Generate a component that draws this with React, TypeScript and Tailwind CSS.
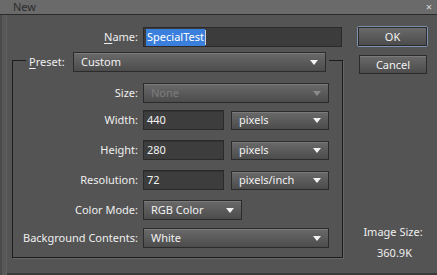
import React from "react";

function Arrow({ disabled }: { disabled?: boolean }) {
  return (
    <svg width="8" height="5" viewBox="0 0 8 5" className="shrink-0">
      <path d="M0 0 L8 0 L4 5 Z" fill={disabled ? "#8a8a8a" : "#f2f2f2"} />
    </svg>
  );
}

function Select({ w, text, disabled, h }: { w: string; text: string; disabled?: boolean; h?: string }) {
  return (
    <div
      className={`${w} ${h ?? "h-[20px]"} flex items-center justify-between pl-[7px] pr-[7px] border border-[#2b2b2b] bg-linear-to-b from-[#6a6a6a] to-[#4c4c4c] shadow-[inset_0_1px_0_#7a7a7a]`}
    >
      <span className={disabled ? "text-[#7c7c7c]" : "text-[#f2f2f2]"}>{text}</span>
      <Arrow disabled={disabled} />
    </div>
  );
}

function Input({ w, text }: { w: string; text: string }) {
  return (
    <div className={`${w} h-[20px] flex items-center pl-[3px] border border-[#2a2a2a] bg-[#3d3d3d] shadow-[inset_0_1px_0_#333] text-[#f2f2f2]`}>
      {text}
    </div>
  );
}

function Row({ label, mt, children }: { label: string; mt: string; children: React.ReactNode }) {
  return (
    <div className={`flex items-center h-[20px] ${mt}`}>
      <div className="w-[126px] text-right text-[#efefef] pr-[1px]">{label}</div>
      <div className="flex items-center gap-[7px] ml-[4px]">{children}</div>
    </div>
  );
}

export default function App() {
  return (
    <div
      className="w-[437px] h-[275px] bg-[#545454] flex flex-col overflow-hidden text-[11px] leading-[14px] text-[#efefef] shadow-[inset_0_-2px_0_#3a3a3a]"
      style={{ fontFamily: '"Noto Sans", "Open Sans", sans-serif' }}
    >
      {/* Title bar */}
      <div className="h-[15px] shrink-0 bg-[#6a6a6a] border-b border-[#2a2a2a] flex items-start justify-between pt-[1px]">
        <span className="ml-[13px] text-[11px] leading-[12px] text-[#2c2c2c]">New</span>
        <span className="mr-[5px] text-[11px] leading-[12px] text-[#d8d8d8]">×</span>
      </div>

      <div className="flex-1 flex shadow-[inset_2px_0_0_#4a4a4a,inset_6px_0_0_#585858,inset_7px_0_0_#626262]">
        {/* Left column */}
        <div className="w-[343px] pl-[12px] flex flex-col">
          {/* Name row */}
          <div className="flex items-center h-[20px] mt-[12px]">
            <div className="w-[131px] text-right pr-[5px] text-[#efefef]">
              <span className="underline underline-offset-2">N</span>ame:
            </div>
            <div className="w-[199px] h-[20px] flex items-center pl-[2px] border border-[#2a2a2a] bg-[#3c3c3c]">
              <span className="bg-[#3b7fdc] text-white px-[1px] h-[17px] flex items-center">SpecialTest</span>
              <span className="w-[1px] h-[15px] bg-[#cfcfcf]" />
            </div>
          </div>

          {/* Group */}
          <fieldset className="mt-[2px] w-[331px] border border-[#1c1c1c] p-0 m-0 min-w-0 shadow-[1px_1px_0_#666]">
            <legend className="ml-[13px] px-[3px] pt-[3px] flex items-center h-[23px]">
              <span className="w-[44px] text-[#efefef]">
                <span className="underline underline-offset-2">P</span>reset:
              </span>
              <Select w="w-[253px]" text="Custom" />
            </legend>

            <div className="flex flex-col pb-[9px]">
              <Row label="Size:" mt="mt-[11px]">
                <Select w="w-[186px]" text="None" disabled />
              </Row>
              <Row label="Width:" mt="mt-[7px]">
                <Input w="w-[81px]" text="440" />
                <Select w="w-[98px]" text="pixels" h="h-[19px]" />
              </Row>
              <Row label="Height:" mt="mt-[10px]">
                <Input w="w-[81px]" text="280" />
                <Select w="w-[98px]" text="pixels" h="h-[19px]" />
              </Row>
              <Row label="Resolution:" mt="mt-[10px]">
                <Input w="w-[81px]" text="72" />
                <Select w="w-[98px]" text="pixels/inch" h="h-[19px]" />
              </Row>
              <Row label="Color Mode:" mt="mt-[10px]">
                <Select w="w-[99px]" text="RGB Color" />
              </Row>
              <Row label="Background Contents:" mt="mt-[8px]">
                <Select w="w-[186px]" text="White" />
              </Row>
            </div>
          </fieldset>
        </div>

        {/* Right column */}
        <div className="flex-1 flex flex-col pl-[14px]">
          <div className="mt-[11px] w-[71px] h-[21px] border border-[#7d92b3] rounded-[2px] p-0">
            <div className="w-full h-full flex items-center justify-center border border-[#2b2b2b] bg-linear-to-b from-[#6a6a6a] to-[#4c4c4c] text-[#f2f2f2]">
              OK
            </div>
          </div>
          <div className="mt-[8px] ml-[2px] w-[68px] h-[19px] flex items-center justify-center border border-[#2b2b2b] bg-linear-to-b from-[#6a6a6a] to-[#4c4c4c] shadow-[inset_0_1px_0_#7a7a7a] text-[#f2f2f2]">
            Cancel
          </div>
          <div className="mt-[151px] w-[72px] flex flex-col items-center">
            <span className="text-[#efefef]">Image Size:</span>
            <span className="mt-[7px] ml-[3px] text-[#efefef]">360.9K</span>
          </div>
        </div>
      </div>
    </div>
  );
}
